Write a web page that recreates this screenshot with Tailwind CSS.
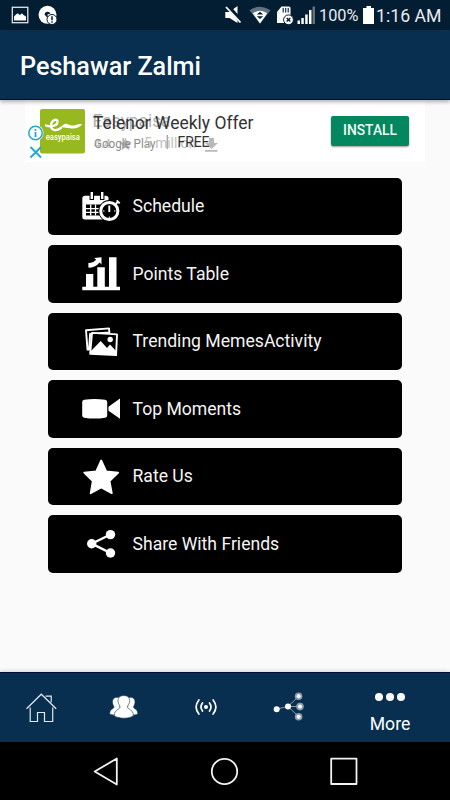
<!DOCTYPE html>
<html lang="en">
<head>
<meta charset="utf-8">
<title>Peshawar Zalmi</title>
<script src="https://cdn.jsdelivr.net/npm/@tailwindcss/browser@4"></script>
</head>
<body class="w-[450px] h-[800px] overflow-hidden bg-[#fafafa] font-['Roboto',sans-serif] flex flex-col">

<!-- Status bar -->
<div class="h-[30px] shrink-0 bg-[#031d33] flex items-center text-[#e8ecef]">
  <svg class="w-[60px] h-[30px]" viewBox="0 0 60 30">
    <rect x="12.3" y="7.3" width="15.5" height="15.4" fill="none" stroke="#e0e4e8" stroke-width="1.3"/>
    <path d="M14 20.500v-4l2.500-2.500q1.500-1 2.500.5l1 .5q2-3 3.500 0l2.500 1.500v4z" fill="#fff"/>
    <circle cx="47.500" cy="14.800" r="9" fill="#fff"/>
    <path d="M44.500 14.500a3.200 3.200 0 0 1 6 -1l-3 1 .5 4z" fill="#031d33"/>
    <circle cx="52" cy="19.500" r="5" fill="#fff" stroke="#031d33" stroke-width="1"/>
    <path d="M52 16.300v4M52 21.300v1.500" stroke="#031d33" stroke-width="1.500"/>
  </svg>
  <svg class="w-[96px] h-[30px] ml-[163px]" viewBox="223 0 96 30">
    <path d="M225.300 12h4.200l8-6v17l-8-5h-4.200z" fill="#fff"/>
    <path d="M226.500 5l15.500 17" stroke="#031d33" stroke-width="4.200"/>
    <path d="M226 7l14.500 15.500" stroke="#fff" stroke-width="1.800"/>
    <path d="M249.500 10.200q10.500-7 21 0l-10.500 13.300z" fill="#62727f"/>
    <path d="M252.700 13.300q7.300-5 14.600 0L260 23.500z" fill="#fff"/>
    <path d="M256.800 14.500L260 11.700l3.200 2.800zM256.800 16.200h6.400L260 19z" fill="#031d33"/>
    <path d="M281.500 6.500h7.500q1.500 0 1.500 1.500v15H277V12z" fill="#fff"/>
    <path d="M283.200 8v4.500M285.700 8v4.500M288.200 8v4.500" stroke="#031d33" stroke-width="1.100"/>
    <circle cx="288.500" cy="19.800" r="4.900" fill="#fff" stroke="#031d33"/>
    <path d="M286.700 18l3.600 3.600M290.300 18l-3.600 3.600" stroke="#031d33" stroke-width="1.400"/>
    <path d="M297.500 20.500h2.500V24h-2.500zM301.300 18h2.500v6h-2.500zM305.200 14.500h2.500V24h-2.500zM309 10h2.500v14H309z" fill="#fff"/>
    <path d="M312.500 6.500h2.500V24h-2.500z" fill="#62727f"/>
  </svg>
  <span class="w-[43px] text-[16.300px] leading-[30px] whitespace-nowrap relative top-[1px]">100%</span>
  <svg class="w-[13px] h-[30px]" viewBox="362 0 13 30"><path d="M366.500 6h4.500v2h3v16h-11V8h3.500z" fill="#fff"/></svg>
  <span class="ml-[1px] text-[17.700px] leading-[30px] whitespace-nowrap relative top-[1px]">1:16 AM</span>
</div>

<!-- Title bar -->
<header class="h-[70px] shrink-0 bg-[#082f50] border-b border-[#00123a] shadow-[0_2px_4px_rgba(0,0,0,0.3)] relative z-10 flex items-center pl-5">
  <h1 class="text-[25.200px] leading-[30px] font-medium text-white pt-[5px]">Peshawar Zalmi</h1>
</header>

<main class="h-[572px] shrink-0 flex flex-col items-center">
  <!-- Banner advertisement, captured between two slides -->
  <section class="w-[400px] h-[62px] bg-white flex">
    <svg class="w-[61px] h-[62px]" viewBox="25 100 61 62">
      <rect x="40" y="109" width="45" height="44.500" rx="2" fill="#97b81f"/>
      <path d="M46 125.500c5 2 12 0 11.500-4.200c-.5-3-6-1.500-6.500 4c-.3 5 5 6.500 10 2.500" fill="none" stroke="#fff" stroke-width="2.300" stroke-linecap="round"/>
      <path d="M61 127c5-6 7-2 10-1.500c4 .7 6-2 11-1.500c-2 4-8 5-12 4.300c-3-.6-5-.6-9-1.300z" fill="#fff"/>
      <text x="45.800" y="139.500" font-family="Roboto" font-size="9.500" font-weight="500" textLength="34" lengthAdjust="spacingAndGlyphs" fill="#fff">easypaisa</text>
      <circle cx="35.500" cy="133" r="8" fill="#fff"/>
      <circle cx="35.500" cy="133" r="6.700" fill="#fff" stroke="#20a9cb" stroke-width="1.500"/>
      <path d="M35.500 129v1.800M35.500 132v5" stroke="#20a9cb" stroke-width="1.800"/>
      <path d="M30.500 147l10.500 10.500M41 147l-10.500 10.500" stroke="#20a9cb" stroke-width="1.900"/>
    </svg>
    <svg class="w-[239px] h-[62px]" viewBox="86 100 239 62" font-family="Roboto">
      <text x="92.500" y="127" font-size="18" textLength="78" lengthAdjust="spacingAndGlyphs" fill="#b2b2b2">Easypaisa</text>
      <text x="93" y="128.500" font-size="18" textLength="160.500" lengthAdjust="spacingAndGlyphs" fill="#333">Telenor Weekly Offer</text>
      <text x="94" y="147.500" font-size="12.500" textLength="17" lengthAdjust="spacingAndGlyphs" fill="#bdbdbd">4.4</text>
      <path d="M125.500 137.500l1.800 4.700 4.700.2-3.700 3 1.300 4.800-4.100-2.700-4.100 2.700 1.300-4.800-3.700-3 4.700-.2z" fill="#b5b5b5"/>
      <text x="94" y="147.500" font-size="13" textLength="61.500" lengthAdjust="spacingAndGlyphs" fill="#8c8c8c">Google Play</text>
      <text x="144" y="148" font-size="14" textLength="52" lengthAdjust="spacingAndGlyphs" fill="#c0c0c0">5 million</text>
      <path d="M167.200 135v14" stroke="#858585" stroke-width="1"/>
      <path d="M209 138h5v5h4l-6.500 6-6.500-6h4zM205 150h12.500v1.800H205z" fill="#b9b9b9"/>
      <text x="177.500" y="146.500" font-size="14" textLength="32" lengthAdjust="spacingAndGlyphs" fill="#333">FREE</text>
    </svg>
    <button class="mt-4 ml-[6px] w-[78px] h-[30px] rounded-[2px] bg-[#03875f] text-[#f1faf6] text-[13.800px] font-medium leading-[30px] shadow-[0_1px_2px_rgba(0,0,0,0.4)] pb-[2px] flex items-center justify-center">INSTALL</button>
  </section>

  <!-- Menu -->
  <nav class="mt-[15.5px] mr-px w-[354px] flex flex-col gap-[10px] text-[#f5f5f5] text-[17.600px]">
    <a class="h-[57.500px] rounded-[5px] bg-black flex items-center pl-8 gap-[11px]">
      <svg class="w-[42px] h-full" viewBox="80 177.500 42 57.500">
        <path d="M85 195.300h21q2.500 0 2.500 2.500V219H85q-2.700 0-2.700-2.500V198q0-2.700 2.700-2.700z" fill="#fff"/>
        <path d="M91.800 191v8.500M102.200 191v8.500" stroke="#000" stroke-width="4.500"/>
        <path d="M91.800 191.500v7M102.200 191.500v7" stroke="#fff" stroke-width="2.400"/>
        <path d="M86 204h15.500v11H86z" fill="#000"/>
        <path d="M86 208.200h14M86 211.900h14M90.700 204v11M95.500 204v11" stroke="#fff" stroke-width="1.300"/>
        <circle cx="109.300" cy="210.500" r="10.900" fill="#000"/>
        <circle cx="109.300" cy="210.500" r="8.600" fill="#000" stroke="#fff" stroke-width="3"/>
        <path d="M115 204l3.500-3M116.700 199.800l3 3M109.300 205v6.500" stroke="#fff" stroke-width="1.900"/>
        <path d="M109.300 216v1.500M103 210.500h1.500M114 210.500h1.500" stroke="#fff"/>
      </svg>
      <span>Schedule</span>
    </a>
    <a class="h-[57.500px] rounded-[5px] bg-black flex items-center pl-8 gap-[11px]">
      <svg class="w-[42px] h-full" viewBox="80 245 42 57.500" fill="#fff">
        <path d="M82.300 286.700h3.700V274h7.300v12.700h4V267.300h7.500v19.400h4.200V257.300h7.500v29.400h3.500v3.600H82.300z"/>
        <path d="M88.400 262.800q4.500.7 7.800-3l-2-1.700 7.300-.8v7.200l-1.900-1.900q-4.500 5.500-11.200 5z"/>
      </svg>
      <span>Points Table</span>
    </a>
    <a class="h-[57.500px] rounded-[5px] bg-black flex items-center pl-8 gap-[11px]">
      <svg class="w-[42px] h-full" viewBox="80 312.500 42 57.500">
        <path d="M86 329.800l23-1.900.4 4-19.300 1.500-1 15.600-1.600.1z" fill="#000" stroke="#fff" stroke-width="1.900" stroke-linejoin="round"/>
        <path d="M92 332.400l25 1.500-.9 20.700-25.900-1.400z" fill="#000" stroke="#fff" stroke-width="1.900" stroke-linejoin="round"/>
        <path d="M90.500 351l10.200-10.500 6.300 7 3-3.500 6 6.500v4l-26-1z" fill="#fff"/>
        <circle cx="110.200" cy="339" r="2.700" fill="#fff"/>
      </svg>
      <span>Trending MemesActivity</span>
    </a>
    <a class="h-[57.500px] rounded-[5px] bg-black flex items-center pl-8 gap-[11px]">
      <svg class="w-[42px] h-full" viewBox="80 380 42 57.500" fill="#fff">
        <path d="M82.200 402q0-1.700 2-2.200 10.400-1.800 20.800 0 2.200.5 2.200 2.200v13.500q0 1.700-2.200 2.200-10.400 1.800-20.800 0-2-.5-2-2.200zM108.500 406.800l11.500-8.300v20.300l-11.500-8z"/>
      </svg>
      <span>Top Moments</span>
    </a>
    <a class="h-[57.500px] rounded-[5px] bg-black flex items-center pl-8 gap-[11px]">
      <svg class="w-[42px] h-full" viewBox="80 447.500 42 57.500" fill="#fff">
        <path d="M101.200 460l5 10.800 12 1.400-8.700 8.300 2.300 12.200-10.600-5.700-10.500 5.700 2.100-12.200-8.600-8.300 12-1.400z" stroke="#fff" stroke-width="1.800" stroke-linejoin="round"/>
      </svg>
      <span>Rate Us</span>
    </a>
    <a class="h-[57.500px] rounded-[5px] bg-black flex items-center pl-8 gap-[11px]">
      <svg class="w-[42px] h-full" viewBox="80 515 42 57.500" fill="#fff">
        <path d="M110.500 534.500l-18.800 9.200 18.800 9.300" fill="none" stroke="#fff" stroke-width="2.400"/>
        <circle cx="91.700" cy="543.700" r="4.700"/><circle cx="110.500" cy="534.600" r="4.700"/><circle cx="110.500" cy="553" r="4.700"/>
      </svg>
      <span>Share With Friends</span>
    </a>
  </nav>
</main>

<!-- Bottom tabs -->
<footer class="h-[70px] shrink-0 bg-[#082f50] border-t border-[#00123a] shadow-[0_-1px_4px_rgba(0,0,0,0.15)] flex">
  <svg class="w-[82px] h-[69px]" viewBox="0 673 82 69" fill="none" stroke="#e3e8ec" stroke-width="1.200">
    <path d="M26.500 708.700l14.800-14.500 14.900 14.500M30.200 707.500v14h7.300v-9h7v9h8.200v-14M45.500 696.200h5.700v6"/>
  </svg>
  <svg class="w-[82px] h-[69px]" viewBox="82 673 82 69" fill="#fff" stroke="#082f50" stroke-width=".6">
    <path d="M117 697.300c3.200 0 4.700 2.500 4.200 5.500-.3 2-1.200 3-1.200 4.300 0 1.500 4 2 4 7.500q-7 2-14.300-.3c0-6 4.200-5 4.200-7.200 0-1.200-1.200-2.200-1.400-4.300-.4-3.200 1.400-5.500 4.500-5.500z"/>
    <path d="M130.500 697.300c-3.200 0-4.700 2.500-4.200 5.500.3 2 1.200 3 1.200 4.300 0 1.500-4 2-4 7.500q7 2 14.300-.3c0-6-4.200-5-4.200-7.200 0-1.200 1.200-2.200 1.400-4.300.4-3.200-1.400-5.500-4.500-5.500z"/>
    <path d="M123.800 695.600c4.600 0 6.300 2.800 5.700 6.300-.4 2.500-1.900 3.400-1.900 5.200 0 2.400 5.900 2.400 5.700 8.300-2.600 3.700-16.400 3.700-19 0-.2-5.900 5.700-5.900 5.700-8.300 0-1.800-1.500-2.700-1.900-5.200-.6-3.500 1.100-6.300 5.700-6.300z"/>
  </svg>
  <svg class="w-[82px] h-[69px]" viewBox="164 673 82 69" fill="none" stroke="#fff" stroke-width="1.700" stroke-linecap="round">
    <circle cx="206" cy="707" r="2" fill="#fff" stroke="none"/>
    <path d="M202.500 703q-3 4 0 8M209.500 703q3 4 0 8M198.900 700q-5.600 7 0 14M213.100 700q5.600 7 0 14"/>
  </svg>
  <svg class="w-[84px] h-[69px]" viewBox="246 673 84 69" fill="#fff">
    <path d="M276.700 709l11.300-2.500 10.500-10M288 706.500h12M288 706.500l10.500 10" fill="none" stroke="#a9b6c1" stroke-width=".8"/>
    <circle cx="276.700" cy="709.200" r="3"/><circle cx="288" cy="706.600" r="3"/>
    <g fill="#8b9cac"><circle cx="298.600" cy="696.300" r="3.800"/><circle cx="300" cy="706.600" r="3.800"/><circle cx="298.600" cy="716.700" r="3.800"/></g>
    <circle cx="298.600" cy="696.300" r="2"/><circle cx="300" cy="706.600" r="2"/><circle cx="298.600" cy="716.700" r="2"/>
  </svg>
  <div class="w-[120px] flex flex-col items-center pt-5 text-white">
    <svg class="w-[32px] h-[8px]" viewBox="0 0 32 8" fill="#fff"><circle cx="5" cy="4" r="4"/><circle cx="16" cy="4" r="4"/><circle cx="27" cy="4" r="4"/></svg>
    <span class="mt-[12px] text-[17.600px] leading-[22px]">More</span>
  </div>
</footer>

<!-- System navigation -->
<div class="h-[58px] shrink-0 bg-black">
  <svg class="w-[450px] h-[58px]" viewBox="0 742 450 58" fill="none" stroke="#f2f2f2" stroke-width="1.800" stroke-linejoin="round">
    <path d="M94.700 771.500l22.100-13v26z"/>
    <circle cx="224.500" cy="771.500" r="12.700"/>
    <rect x="331.200" y="758.700" width="25.300" height="25.300"/>
  </svg>
</div>
</body>
</html>
